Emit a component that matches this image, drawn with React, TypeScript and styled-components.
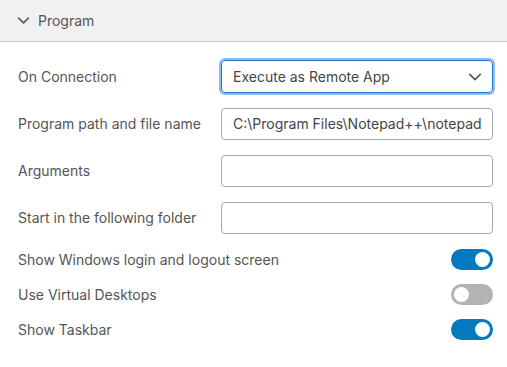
import React, { useState } from "react";
import styled, { createGlobalStyle } from "styled-components";

const Global = createGlobalStyle`
  html, body { margin: 0; padding: 0; background: #fff; }
  body { font-family: Inter, "Noto Sans", sans-serif; color: #555; }
  * { box-sizing: border-box; }
`;

const Panel = styled.div`
  width: 507px;
  height: 367px;
  background: #fff;
  display: flex;
  flex-direction: column;
`;

const Header = styled.div`
  height: 42px;
  background: #f1f1f1;
  border-bottom: 1px solid #c9c9c9;
  display: flex;
  align-items: center;
  gap: 8px;
  padding-left: 17px;
  font-size: 14px;
  color: #555;
`;

const Body = styled.div`
  display: flex;
  flex-direction: column;
  padding: 18px 14px 0 18px;
`;

const FieldRow = styled.div`
  display: grid;
  grid-template-columns: 203px 1fr;
  align-items: center;
  height: 33px;
  margin-bottom: 14px;
  font-size: 14px;
`;

const Label = styled.span`
  color: #555;
  white-space: nowrap;
`;

const SelectBox = styled.div`
  height: 33px;
  border: 1px solid #1f73c9;
  border-radius: 4px;
  box-shadow: 0 0 0 2px #8fbdf0;
  display: flex;
  align-items: center;
  justify-content: space-between;
  padding: 0 10px 0 11px;
  font-size: 14px;
  color: #444;
`;

const TextInput = styled.div`
  height: 32px;
  border: 1px solid #a9a9a9;
  border-radius: 4px;
  display: flex;
  align-items: center;
  padding: 0 11px;
  font-size: 14px;
  color: #444;
  overflow: hidden;
  white-space: nowrap;
`;

const ToggleList = styled.div`
  display: flex;
  flex-direction: column;
  gap: 14px;
  padding-top: 1px;
`;

const ToggleRow = styled.div`
  display: flex;
  align-items: center;
  justify-content: space-between;
  height: 21px;
  font-size: 14px;
`;

const Switch = styled.button<{ $on: boolean }>`
  width: 42px;
  height: 21px;
  border-radius: 11px;
  border: none;
  padding: 0;
  background: ${(p) => (p.$on ? "#0479bf" : "#b3b3b3")};
  position: relative;
  cursor: pointer;
  &::after {
    content: "";
    position: absolute;
    top: 3px;
    left: ${(p) => (p.$on ? "24px" : "3px")};
    width: 15px;
    height: 15px;
    border-radius: 50%;
    background: #fff;
  }
`;

const Chevron = ({ size = 12 }: { size?: number }) => (
  <svg width={size} height={size} viewBox="0 0 12 12" fill="none">
    <path d="M1.5 3.8 L6 8.2 L10.5 3.8" stroke="#555" strokeWidth="1.4" strokeLinecap="round" strokeLinejoin="round" />
  </svg>
);

export default function App() {
  const [toggles, setToggles] = useState([true, false, true]);
  const names = ["Show Windows login and logout screen", "Use Virtual Desktops", "Show Taskbar"];
  return (
    <Panel>
      <Global />
      <Header>
        <Chevron size={13} />
        <span>Program</span>
      </Header>
      <Body>
        <FieldRow>
          <Label>On Connection</Label>
          <SelectBox>
            <span>Execute as Remote App</span>
            <Chevron size={14} />
          </SelectBox>
        </FieldRow>
        <FieldRow>
          <Label>Program path and file name</Label>
          <TextInput>C:\Program Files\Notepad++\notepad</TextInput>
        </FieldRow>
        <FieldRow>
          <Label>Arguments</Label>
          <TextInput />
        </FieldRow>
        <FieldRow>
          <Label>Start in the following folder</Label>
          <TextInput />
        </FieldRow>
        <ToggleList>
          {names.map((n, i) => (
            <ToggleRow key={n}>
              <Label>{n}</Label>
              <Switch
                $on={toggles[i]}
                onClick={() => setToggles(toggles.map((t, j) => (j === i ? !t : t)))}
              />
            </ToggleRow>
          ))}
        </ToggleList>
      </Body>
    </Panel>
  );
}
